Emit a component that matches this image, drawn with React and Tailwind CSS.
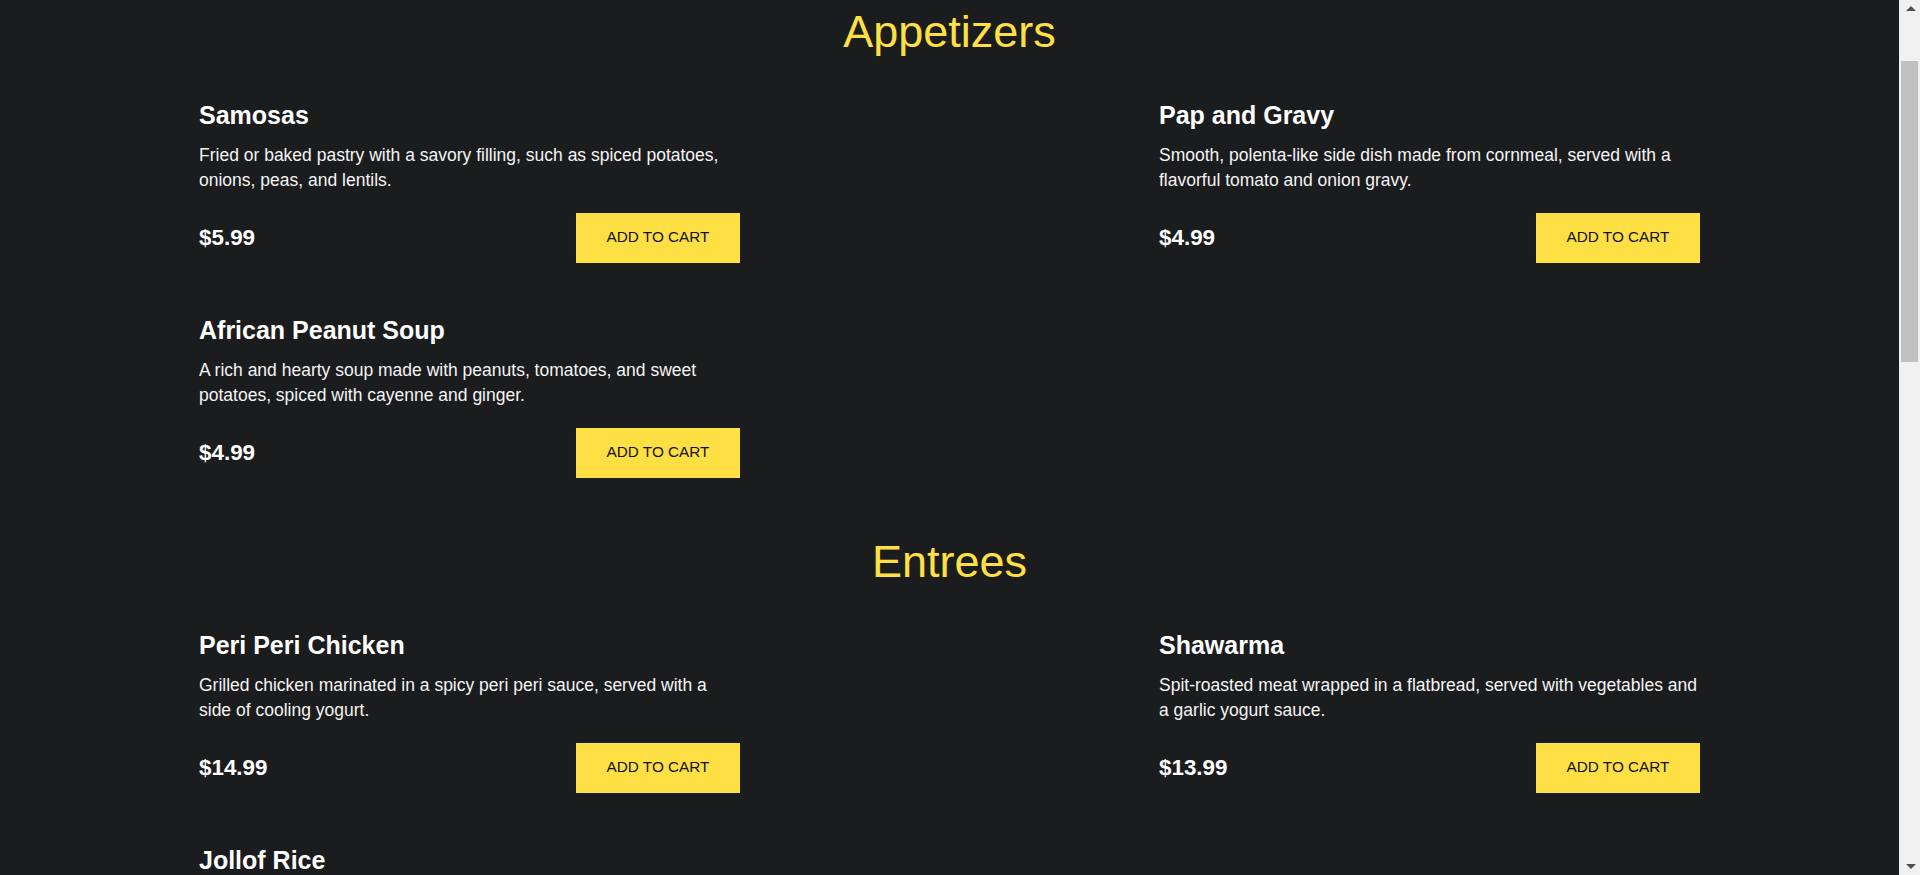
import React from 'react'

const menu = [
  {
    title: 'Appetizers',
    items: [
      {
        name: 'Samosas',
        desc: 'Fried or baked pastry with a savory filling, such as spiced potatoes, onions, peas, and lentils.',
        price: '$5.99',
      },
      {
        name: 'Pap and Gravy',
        desc: 'Smooth, polenta-like side dish made from cornmeal, served with a flavorful tomato and onion gravy.',
        price: '$4.99',
      },
      {
        name: 'African Peanut Soup',
        desc: 'A rich and hearty soup made with peanuts, tomatoes, and sweet potatoes, spiced with cayenne and ginger.',
        price: '$4.99',
      },
    ],
  },
  {
    title: 'Entrees',
    items: [
      {
        name: 'Peri Peri Chicken',
        desc: 'Grilled chicken marinated in a spicy peri peri sauce, served with a side of cooling yogurt.',
        price: '$14.99',
      },
      {
        name: 'Shawarma',
        desc: 'Spit-roasted meat wrapped in a flatbread, served with vegetables and a garlic yogurt sauce.',
        price: '$13.99',
      },
      {
        name: 'Jollof Rice',
        desc: 'A one-pot rice dish cooked in a rich tomato and pepper sauce with onions and spices.',
        price: '$12.99',
      },
    ],
  },
]

function MenuItem({ item }) {
  return (
    <div className="flex flex-col">
      <h3 className="text-[25px] leading-[30px] font-bold text-white">{item.name}</h3>
      <p className="mt-[13px] text-[17.5px] leading-[25px] text-[#f4f4f4]">{item.desc}</p>
      <div className="mt-[19.5px] flex items-center justify-between">
        <span className="text-[22.4px] font-bold text-white">{item.price}</span>
        <button className="h-[50px] w-[164px] bg-[#fee044] text-[15.3px] text-[#111] uppercase">
          Add to cart
        </button>
      </div>
    </div>
  )
}

// browser-style scrollbar seen on the right of the page
function Scrollbar() {
  return (
    <div className="fixed top-0 right-0 flex h-screen w-[21px] flex-col bg-[#f1f1f1]">
      <div className="flex h-[17px] items-center justify-center pl-[2px]">
        <div className="h-0 w-0 border-x-[5px] border-b-[5px] border-x-transparent border-b-[#505050]" />
      </div>
      <div className="flex-1 pt-[44px] pl-[2px] pr-[2px]">
        <div className="h-[301px] bg-[#c1c1c1]" />
      </div>
      <div className="flex h-[17px] items-center justify-center pl-[2px]">
        <div className="h-0 w-0 border-x-[5px] border-t-[5px] border-x-transparent border-t-[#505050]" />
      </div>
    </div>
  )
}

export default function App() {
  return (
    <main
      className="min-h-screen bg-[#1b1c1e] pt-[6.4px] pb-[120px] pr-[21px]"
      style={{ fontFamily: '"Liberation Sans", Arial, sans-serif' }}
    >
      {menu.map((section) => (
        <section key={section.title} className="mb-[58.4px]">
          {/* Section heading */}
          <h2 className="text-center text-[45px] leading-[52px] text-[#fee044]">{section.title}</h2>

          <div className="mt-[42px] ml-[199px] grid grid-cols-[541px_541px] gap-x-[419px] gap-y-[52.3px]">
            {section.items.map((item) => (
              <MenuItem key={item.name} item={item} />
            ))}
          </div>
        </section>
      ))}
      <Scrollbar />
    </main>
  )
}
